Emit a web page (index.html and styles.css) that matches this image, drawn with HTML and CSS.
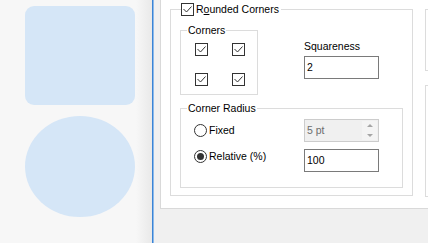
FILE: index.html
```html
<!DOCTYPE html>
<html lang="en">
<head>
  <meta charset="UTF-8">
  <title>Rounded Corners</title>
  <link rel="stylesheet" href="styles.css">
</head>
<body>
  <div class="preview">
    <div class="shape rounded"></div>
    <div class="shape ellipse"></div>
  </div>
  <div class="splitter"></div>

  <div class="options">
    <div class="page">
      <fieldset class="group rounded-group">
        <legend class="legend-check">
          <span class="check checked"><svg viewBox="0 0 11 11"><path d="M1.5 5 L4.5 8 L9.5 2.5"/></svg></span>
          <span>R<u>o</u>unded Corners</span>
        </legend>
        <div class="group-body rounded-body">
          <div class="top-row">
            <fieldset class="group corners">
              <legend>Corners</legend>
              <div class="group-body corner-grid">
                <span class="check checked"><svg viewBox="0 0 11 11"><path d="M1.5 5 L4.5 8 L9.5 2.5"/></svg></span>
                <span class="check checked"><svg viewBox="0 0 11 11"><path d="M1.5 5 L4.5 8 L9.5 2.5"/></svg></span>
                <span class="check checked"><svg viewBox="0 0 11 11"><path d="M1.5 5 L4.5 8 L9.5 2.5"/></svg></span>
                <span class="check checked"><svg viewBox="0 0 11 11"><path d="M1.5 5 L4.5 8 L9.5 2.5"/></svg></span>
              </div>
            </fieldset>
            <div class="field">
              <div class="field-label">Squareness</div>
              <div class="textbox">2</div>
            </div>
          </div>

          <fieldset class="group radius">
            <legend>Corner Radius</legend>
            <div class="group-body radius-body">
              <div class="radio-col">
                <div class="radio-item"><span class="radio"></span>Fixed</div>
                <div class="radio-item"><span class="radio selected"></span>Relative (%)</div>
              </div>
              <div class="input-col">
                <div class="spin">
                  <div class="spin-value">5 pt</div>
                  <div class="spin-buttons">
                    <div class="spin-btn"><span class="arrow up"></span></div>
                    <div class="spin-btn"><span class="arrow down"></span></div>
                  </div>
                </div>
                <div class="textbox">100</div>
              </div>
            </div>
          </fieldset>
        </div>
      </fieldset>

      <div class="side">
        <div class="side-box first"></div>
        <div class="side-box second"></div>
      </div>
    </div>
  </div>
</body>
</html>
```

FILE: styles.css
```css
* {
  box-sizing: border-box;
}

body {
  margin: 0;
  height: 243px;
  display: flex;
  overflow: hidden;
  font-family: "Liberation Sans", Arial, sans-serif;
  font-size: 10.5px;
  line-height: 13px;
  color: #000;
  background-color: #f0f0f0;
}

/* left preview */
.preview {
  width: 152px;
  flex-shrink: 0;
  display: flex;
  flex-direction: column;
  gap: 11px;
  padding: 6px 0 0 25px;
  background: linear-gradient(to right, #f7f7f7 0, #f7f7f7 136px, #e9e9e9 152px);
}
.shape {
  width: 110px;
  background-color: #d5e6f7;
}
.shape.rounded {
  height: 99px;
  border-radius: 9px;
}
.shape.ellipse {
  height: 101px;
  border-radius: 50%;
}

.splitter {
  width: 2px;
  flex-shrink: 0;
  background: linear-gradient(to right, #3a84d6 0, #3a84d6 1px, #8db9e9 1px);
}

/* options page */
.options {
  flex: 1;
  min-width: 0;
  overflow: hidden;
  padding-left: 6px;
}
.page {
  width: 330px;
  display: flex;
  align-items: flex-start;
  padding: 3px 0 11px 9px;
  background-color: #fff;
  border: 1px solid #d9d9d9;
  border-top: none;
}

.group {
  margin: 0;
  padding: 0;
  border: 1px solid #dcdcdc;
  min-width: 0;
}
.group legend {
  margin-left: 6px;
  padding: 0 1px;
}

.rounded-group {
  width: 243px;
  flex-shrink: 0;
}
.rounded-group .legend-check {
  display: flex;
  align-items: center;
  gap: 2px;
  margin-left: 10px;
  padding: 0 2px 0 0;
}
.rounded-body {
  padding: 8px 9px 7px 9px;
}

.top-row {
  display: flex;
  align-items: flex-start;
}
.corners {
  width: 78px;
}
.corner-grid {
  display: grid;
  grid-template-columns: 13px 13px;
  column-gap: 24px;
  row-gap: 17px;
  padding: 6px 13px 8px 14px;
}

.field {
  margin: 16px 0 0 46px;
}
.field-label {
  margin-bottom: 3px;
}
.textbox {
  width: 75px;
  height: 23px;
  padding-left: 2px;
  line-height: 21px;
  background-color: #fff;
  border: 1px solid #7a7a7a;
}

/* check box and radio */
.check {
  width: 13px;
  height: 13px;
  display: inline-block;
  background-color: #fff;
  border: 1px solid #333;
}
.check svg {
  display: block;
  width: 11px;
  height: 11px;
  fill: none;
  stroke: #333;
  stroke-width: 1;
}

.radius {
  margin-top: 7px;
}
.radius-body {
  display: flex;
  padding: 0 0 15px 13px;
}
.radio-col {
  width: 110px;
  display: flex;
  flex-direction: column;
  gap: 13px;
  padding-top: 9px;
}
.radio-item {
  display: flex;
  align-items: center;
  gap: 2px;
  height: 13px;
}
.radio {
  width: 13px;
  height: 13px;
  display: flex;
  align-items: center;
  justify-content: center;
  border: 1px solid #333;
  border-radius: 50%;
  background-color: #fff;
}
.radio.selected::after {
  content: "";
  width: 7px;
  height: 7px;
  border-radius: 50%;
  background-color: #333;
}
.input-col {
  display: flex;
  flex-direction: column;
  gap: 7px;
  padding-top: 4px;
}

.spin {
  width: 75px;
  height: 23px;
  display: flex;
  color: #6d6d6d;
  background-color: #f0f0f0;
  border: 1px solid #cccccc;
}
.spin-value {
  flex: 1;
  padding-left: 2px;
  line-height: 21px;
}
.spin-buttons {
  width: 15px;
  margin: 1px 1px 1px 0;
  display: flex;
  flex-direction: column;
  background-color: #f4f4f4;
}
.spin-btn {
  flex: 1;
  display: flex;
  align-items: center;
  justify-content: center;
}
.arrow {
  width: 0;
  height: 0;
  border-left: 3px solid transparent;
  border-right: 3px solid transparent;
}
.arrow.up {
  border-bottom: 3px solid #a5a5a5;
}
.arrow.down {
  border-top: 3px solid #a5a5a5;
}

/* next column, cut off by the window */
.side {
  margin-left: 12px;
  width: 60px;
  display: flex;
  flex-direction: column;
}
.side-box {
  border: 1px solid #dcdcdc;
}
.side-box.first {
  margin-top: 6px;
  height: 62px;
}
.side-box.second {
  margin-top: 14px;
  height: 112px;
}
```
